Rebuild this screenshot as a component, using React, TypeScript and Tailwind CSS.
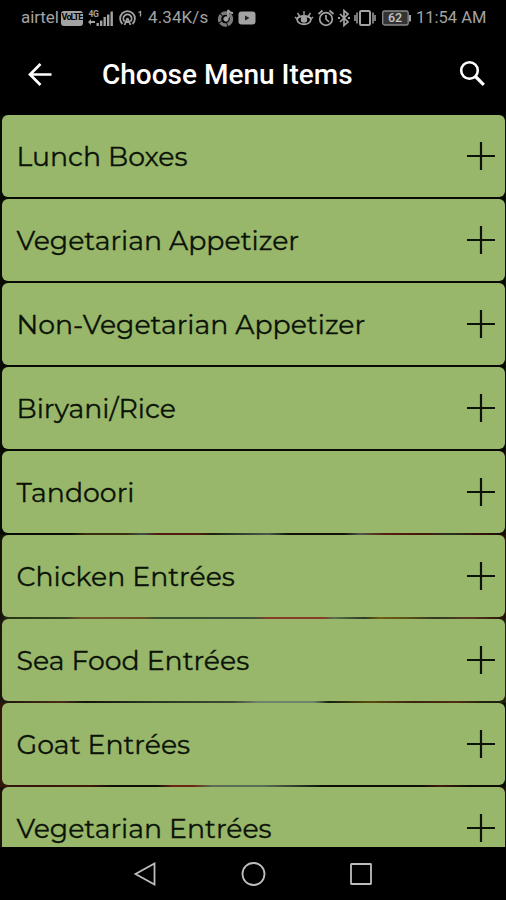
const menuItems = [
  "Lunch Boxes",
  "Vegetarian Appetizer",
  "Non-Vegetarian Appetizer",
  "Biryani/Rice",
  "Tandoori",
  "Chicken Entrées",
  "Sea Food Entrées",
  "Goat Entrées",
  "Vegetarian Entrées",
];

// the dimmed food photo only shows through the gaps between the lower rows
const dividers = [
  "bg-[#080b04]",
  "bg-[#080b04]",
  "bg-[#080b04]",
  "bg-[#080b04]",
  "bg-[linear-gradient(90deg,#080b04_14%,#3c2c0c_17%,#3c2c0c_25%,#3d5045_28%,#521a10_31%,#521a10_39%,#1c200c_42%,#49594b_53%,#101207_57%,#101207_68%,#4b584b_71%,#581d10_76%,#451509_84%,#29301c_89%,#351008_95%,#150b06_100%)]",
  "bg-[linear-gradient(90deg,#141109_0%,#2b3518_2%,#35401f_13%,#70512a_16%,#6b4c22_28%,#3b4f2f_31%,#3b5337_50%,#873c26_53%,#873c26_64%,#59704a_66%,#2e3a22_72%,#6e5d13_75%,#605016_80%,#303a22_86%,#593820_93%,#22120a_100%)]",
  "bg-[linear-gradient(90deg,#1c160e_0%,#4a2b16_12%,#11150a_17%,#293220_29%,#3d4b34_46%,#71836a_51%,#71836a_62%,#17200f_65%,#5a4c10_73%,#3b2310_82%,#4e3010_90%,#202010_96%)]",
  "bg-[linear-gradient(90deg,#32150a_0%,#40170a_18%,#0d1007_22%,#0d1007_31%,#6d2412_34%,#6d2412_38%,#5c6e56_42%,#5c6e56_52%,#26301e_60%,#0b0f06_64%,#0b0f06_83%,#431a0c_87%,#0b0f06_93%)]",
  "bg-[#1c110a]",
];

function StatusBar() {
  return (
    <div className="flex h-9 shrink-0 items-center pl-[21px] text-[17px] text-[#a3a3a3]">
      <span className="w-10 tracking-[-0.1px]">airtel</span>
      <span className="flex h-[15px] w-[22px] items-center justify-center rounded-[3px] bg-[#a3a3a3] text-[9px] font-bold tracking-[-0.9px] text-black">
        VoLTE
      </span>
      <svg className="ml-1 h-5 w-7" viewBox="0 0 28 20" fill="currentColor">
        <text x="1.500" y="8.500" fontSize="8.500" fontWeight="700" letterSpacing="-0.5">4G</text>
        <path d="M1 14l3-3v2h4v2H4v2zM9.500 15h2.400v3H9.500zM13 12.500h2.400V18H13zM16.500 9h2.400v9h-2.400zM20 6.500h2.400V18H20zM23.500 3.500h2.400V18h-2.400z" />
      </svg>
      <svg className="ml-[3px] h-5 w-[26px]" viewBox="0 0 26 20" fill="none" stroke="currentColor" strokeWidth="1.8">
        <path d="M4.500 16a7.400 7.400 0 1 1 10 0M6.600 13.500a4.100 4.100 0 1 1 5.800 0" />
        <path d="M9.500 10l-3 7M9.500 10l3 7M8 14h3" />
        <path d="M20.500 4.500l2-1v5" strokeWidth="1.3" />
      </svg>
      <span className="ml-1 w-[68px] tracking-[0.1px]">4.34K/s</span>
      <svg className="ml-px h-5 w-[18px]" viewBox="0 0 18 20" fill="none" stroke="currentColor">
        <circle cx="8.500" cy="11" r="6" strokeWidth="3.400" strokeDasharray="7 .8" opacity=".75" />
        <circle cx="9" cy="11" r="2.200" fill="currentColor" />
        <path d="M11 10V2c1 2 3 3 5 3" strokeWidth="1.800" />
      </svg>
      <svg className="ml-[3px] h-5 w-[18px]" viewBox="0 0 18 20">
        <rect x=".5" y="3.500" width="17" height="13" rx="3" fill="currentColor" />
        <path d="M7 7.500v5l4.500-2.500z" fill="#222" />
      </svg>
      <svg className="ml-[38px] h-5 w-5" viewBox="0 0 20 20" fill="none" stroke="currentColor" strokeWidth="1.8">
        <path d="M3 11c.5 7 13.500 7 14 0-2-4-12-4-14 0z" />
        <circle cx="10" cy="11.500" r="2.300" fill="currentColor" />
        <path d="M10 7V3M5.500 8L3.500 5M14.500 8l2-3M3 11L1 9M17 11l2-2" strokeWidth="1.4" />
      </svg>
      <svg className="ml-[3px] h-5 w-[18px]" viewBox="0 0 18 20" fill="none" stroke="currentColor" strokeWidth="1.7">
        <circle cx="9" cy="11" r="6.300" />
        <path d="M9 7v4l3 3M1.500 6l4-3.500M16.500 6l-4-3.500" />
      </svg>
      <svg className="ml-[2px] h-5 w-[14px]" viewBox="0 0 14 20" fill="none" stroke="currentColor" strokeWidth="1.7">
        <path d="M3 6l8 8-4 3.500v-15L11 6l-8 8" />
        <path d="M1 10h2M11 10h2" strokeWidth="2" />
      </svg>
      <svg className="ml-[3px] h-5 w-[22px]" viewBox="0 0 22 20" fill="none" stroke="currentColor" strokeWidth="2">
        <rect x="6" y="3" width="10" height="14" rx="1.500" />
        <path d="M3 4.500v11M19 4.500v11M1 7v6M21 7v6" strokeWidth="1.5" />
      </svg>
      <svg className="ml-[6px] h-5 w-[30px]" viewBox="0 0 30 20">
        <rect x=".7" y="3" width="25.500" height="14" rx="2" fill="#333" stroke="#8a8a8a" strokeWidth="1.3" />
        <path d="M27 7h2v6.500h-2z" fill="currentColor" />
        <text x="13" y="14.300" textAnchor="middle" fill="#c4c4c4" fontSize="12.500" fontWeight="500">62</text>
      </svg>
      <span className="ml-[4px] whitespace-nowrap text-[16.5px]">11:54 AM</span>
    </div>
  );
}

function Header() {
  return (
    <header className="flex h-[79px] shrink-0 items-center pr-[18px] pb-[2px] pl-[25px] text-white">
      <svg className="h-[30px] w-[30px]" viewBox="0 0 30 30" fill="none" stroke="currentColor" strokeWidth="2.7">
        <path d="M26.500 14.500H6M15.500 4L5 14.500 15.500 25" />
      </svg>
      <h1 className="ml-[47px] flex-1 text-[28px] font-medium whitespace-nowrap">Choose Menu Items</h1>
      <svg className="h-[30px] w-[30px]" viewBox="0 0 30 30" fill="none" stroke="currentColor" strokeWidth="2.6">
        <circle cx="11.500" cy="10.500" r="8.300" />
        <path d="M17 16l8.800 8.800" strokeWidth="3.200" />
      </svg>
    </header>
  );
}

export default function App() {
  return (
    <div className="flex h-[900px] w-[506px] flex-col overflow-hidden bg-black font-['Roboto',sans-serif]">
      <StatusBar />
      <Header />
      <main className="flex min-h-0 flex-1 flex-col overflow-hidden">
        {menuItems.map((label, i) => (
          <div key={label} className={`h-[84px] shrink-0 pr-px pl-[2px] ${dividers[i]}`}>
            <div className="flex h-[82px] items-center justify-between rounded-[6px] bg-[#98b76a] pr-[10px] pl-[14.5px] text-[#0b1207]">
              <span className="pt-[3px] font-['Montserrat','Inter',sans-serif] text-[26.75px] whitespace-nowrap [-webkit-text-stroke:0.3px]">
                {label}
              </span>
              <svg className="h-7 w-7" viewBox="0 0 28 28" stroke="currentColor" strokeWidth="2.2">
                <path d="M0 14h28M14 0v28" />
              </svg>
            </div>
          </div>
        ))}
      </main>
      <nav className="flex h-[53px] shrink-0 items-center pl-[133px] text-[#bdbdbd]">
        <svg className="h-6 w-6" viewBox="0 0 24 24" fill="none" stroke="currentColor" strokeWidth="1.8">
          <path d="M21.500 1.500v21L2.500 12z" />
        </svg>
        <svg className="ml-[84px] h-[26px] w-[26px]" viewBox="0 0 26 26" fill="none" stroke="currentColor" strokeWidth="1.8">
          <circle cx="12.500" cy="13" r="11" />
        </svg>
        <svg className="ml-[82px] h-6 w-6" viewBox="0 0 24 24" fill="none" stroke="currentColor" strokeWidth="1.8">
          <rect x="2" y="2" width="20" height="20" rx=".5" />
        </svg>
      </nav>
    </div>
  );
}
